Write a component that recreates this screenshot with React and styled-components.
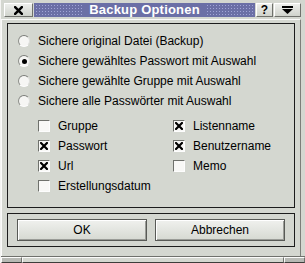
import React from 'react';
import styled, { createGlobalStyle } from 'styled-components';

const GlobalStyle = createGlobalStyle`
  html, body {
    margin: 0;
    padding: 0;
    background: #d4d7d0;
  }
  * {
    box-sizing: border-box;
  }
`;

const Window = styled.div`
  width: 305px;
  height: 263px;
  background: #d4d7d0;
  display: flex;
  flex-direction: column;
  padding-top: 3px;
  border-left: 1px solid #f4f4f2;
  font-family: 'Liberation Sans', Arial, sans-serif;
  font-size: 12px;
  color: #000;
  overflow: hidden;
`;

const TitleBar = styled.div`
  display: flex;
  height: 14px;
  margin: 0 4px 0 3px;
  gap: 1px;
`;

const TitleButton = styled.div`
  width: ${(p) => p.$w}px;
  height: 14px;
  flex: none;
  display: flex;
  align-items: center;
  justify-content: center;
  background: linear-gradient(#eeefec, #d0d3cc);
  border-top: 1px solid #fff;
  border-left: 1px solid #fff;
  border-right: 1px solid #6f716c;
  border-bottom: 1px solid #6f716c;
  font-weight: bold;
  font-size: 12px;
  line-height: 1;
`;

const TitleStrip = styled.div`
  flex: 1;
  display: flex;
  align-items: center;
  justify-content: center;
  background-color: #6b6fa6;
  background-image: radial-gradient(circle, #a0a4d6 0.8px, transparent 0.9px);
  background-size: 3px 3px;
  background-position: 1px 1px;
`;

const TitleText = styled.span`
  background: #6b6fa6;
  color: #fff;
  font-weight: bold;
  font-size: 13px;
  line-height: 14px;
  padding: 0 6px;
  letter-spacing: 0.2px;
`;

const Client = styled.div`
  flex: 1;
  margin-top: 2px;
  margin-right: 4px;
  border-top: 1px solid #fbfbfa;
  border-left: 1px solid #fbfbfa;
  border-right: 1px solid #7c7e79;
  padding: 3px 5px 0 5px;
  display: flex;
  flex-direction: column;
  gap: 5px;
`;

const GroupBox = styled.div`
  border: 1px solid #1c1c1c;
  height: 185px;
  padding: 7px 0 0 10px;
  display: flex;
  flex-direction: column;
`;

const Row = styled.label`
  display: flex;
  align-items: center;
  height: 20px;
  gap: 8px;
  white-space: nowrap;
`;

const RadioCircle = styled.span`
  width: 12px;
  height: 12px;
  flex: none;
  border-radius: 50%;
  background: #f6f6f4;
  border: 1px solid;
  border-color: #7a7c78 #dfe0dd #fdfdfd #8c8e89;
  display: flex;
  align-items: center;
  justify-content: center;
  &::after {
    content: '';
    width: 5px;
    height: 5px;
    border-radius: 50%;
    background: ${(p) => (p.$on ? '#000' : 'transparent')};
  }
`;

const CheckGrid = styled.div`
  margin-top: 5px;
  padding-left: 20px;
  display: grid;
  grid-template-columns: 135px 1fr;
`;

const CheckBox = styled.span`
  width: 12px;
  height: 12px;
  flex: none;
  background: #f8f8f6;
  border: 1px solid;
  border-color: #6f716c #fdfdfd #fdfdfd #6f716c;
  display: flex;
  align-items: center;
  justify-content: center;
`;

const ButtonBox = styled.div`
  border: 1px solid #1c1c1c;
  height: 34px;
  display: flex;
  align-items: center;
  gap: 8px;
  padding: 0 9px;
`;

const PushButton = styled.button`
  flex: 1;
  height: 22px;
  font-family: 'Liberation Sans', Arial, sans-serif;
  font-size: 12px;
  color: #000;
  background: linear-gradient(#f0f1ee, #d6d9d2);
  border: 1px solid #585a56;
  box-shadow: inset 1px 1px 0 #fff, inset -1px -1px 0 #9a9c97;
  padding: 0;
`;

const BottomFrame = styled.div`
  height: 7px;
  flex: none;
  display: flex;
  border-top: 1px solid #6f716c;
`;

const Handle = styled.div`
  width: ${(p) => (p.$w ? `${p.$w}px` : 'auto')};
  flex: ${(p) => (p.$w ? 'none' : '1')};
  background: ${(p) => (p.$w ? '#b7b9b4' : '#d4d7d0')};
  border-top: 1px solid #fbfbfa;
  border-left: 1px solid #fbfbfa;
  border-right: 1px solid #6f716c;
  border-bottom: 1px solid #3c3d3a;
`;

const Cross = ({ size = 8, stroke = 2 }) => (
  <svg width={size} height={size} viewBox="0 0 8 8">
    <path d="M1 1 L7 7 M7 1 L1 7" stroke="#000" strokeWidth={stroke} strokeLinecap="square" />
  </svg>
);

const MenuIcon = () => (
  <svg width="11" height="8" viewBox="0 0 11 8">
    <rect x="0" y="0" width="11" height="2" fill="#000" />
    <path d="M0 3 H11 L5.5 8 Z" fill="#000" />
  </svg>
);

const radios = [
  { label: 'Sichere original Datei (Backup)', on: false },
  { label: 'Sichere gewähltes Passwort mit Auswahl', on: true },
  { label: 'Sichere gewählte Gruppe mit Auswahl', on: false },
  { label: 'Sichere alle Passwörter mit Auswahl', on: false },
];

const checks = [
  { label: 'Gruppe', on: false },
  { label: 'Listenname', on: true },
  { label: 'Passwort', on: true },
  { label: 'Benutzername', on: true },
  { label: 'Url', on: true },
  { label: 'Memo', on: false },
  { label: 'Erstellungsdatum', on: false },
];

export default function App() {
  return (
    <>
      <GlobalStyle />
      <Window>
        <TitleBar>
          <TitleButton $w={29}>
            <Cross size={9} stroke={2.2} />
          </TitleButton>
          <TitleStrip>
            <TitleText>Backup Optionen</TitleText>
          </TitleStrip>
          <TitleButton $w={17}>?</TitleButton>
          <TitleButton $w={27}>
            <MenuIcon />
          </TitleButton>
        </TitleBar>
        <Client>
          <GroupBox>
            {radios.map((r) => (
              <Row key={r.label}>
                <RadioCircle $on={r.on} />
                {r.label}
              </Row>
            ))}
            <CheckGrid>
              {checks.map((c) => (
                <Row key={c.label}>
                  <CheckBox>{c.on && <Cross size={8} stroke={2.2} />}</CheckBox>
                  {c.label}
                </Row>
              ))}
            </CheckGrid>
          </GroupBox>
          <ButtonBox>
            <PushButton>OK</PushButton>
            <PushButton>Abbrechen</PushButton>
          </ButtonBox>
        </Client>
        <BottomFrame>
          <Handle $w={21} />
          <Handle />
          <Handle $w={21} />
        </BottomFrame>
      </Window>
    </>
  );
}
